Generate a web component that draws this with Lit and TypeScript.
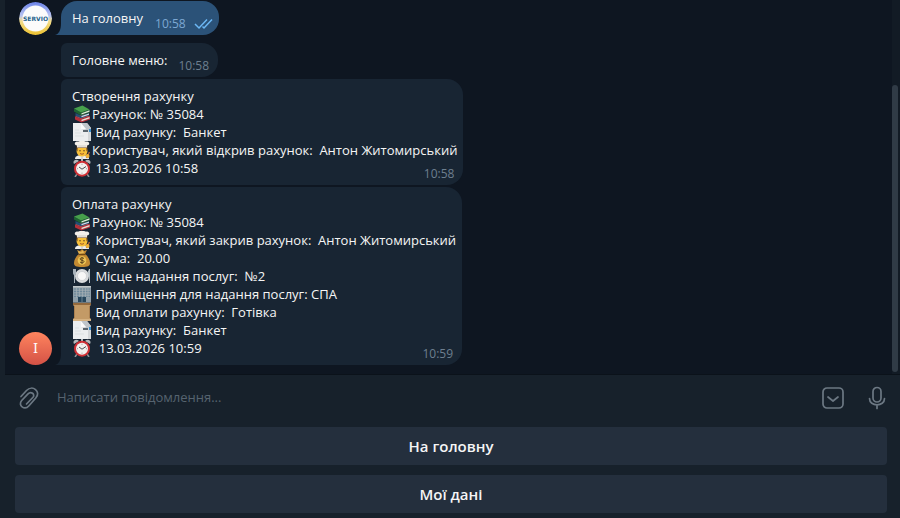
import { LitElement, html, css, svg } from "lit";
import { customElement } from "lit/decorators.js";

type IconName = "books" | "page" | "cook" | "clock" | "money" | "plate" | "office" | "scroll";
interface Line { icon?: IconName; text: string; }

const CREATED: Line[] = [
  { text: "Створення рахунку" },
  { icon: "books", text: "Рахунок: № 35084" },
  { icon: "page", text: " Вид рахунку:  Банкет" },
  { icon: "cook", text: "Користувач, який відкрив рахунок:  Антон Житомирський" },
  { icon: "clock", text: " 13.03.2026 10:58" },
];

const PAID: Line[] = [
  { text: "Оплата рахунку" },
  { icon: "books", text: "Рахунок: № 35084" },
  { icon: "cook", text: " Користувач, який закрив рахунок:  Антон Житомирський" },
  { icon: "money", text: " Сума:  20.00" },
  { icon: "plate", text: " Місце надання послуг:  №2" },
  { icon: "office", text: " Приміщення для надання послуг: СПА" },
  { icon: "scroll", text: " Вид оплати рахунку:  Готівка" },
  { icon: "page", text: " Вид рахунку:  Банкет" },
  { icon: "clock", text: "  13.03.2026 10:59" },
];

const ICONS = {
  books: svg`
    <path d="M2 11.500 8 14l9-3v3.500L8.500 17.500 2 14.500z" fill="#b5303a"/>
    <path d="M8.500 14.800 16.500 12v1.600L8.500 16.300z" fill="#e8ddd2"/>
    <path d="M2 11.500 10 9l7 2-9 3z" fill="#d3454a"/>
    <path d="M2.500 8 8 10.500 16 8v2.500L8 13.300 2.500 11z" fill="#234f74"/>
    <path d="M8.500 11 16 8.600v1.200L8.500 12.300z" fill="#d6e2e8"/>
    <path d="M1 3.500 8 7.500 16.500 4.500v3L8 10.500 1 6.500z" fill="#1d6332"/>
    <path d="M1 3.500 9.500.500l7 4L8 7.500z" fill="#47a04c"/>
    <path d="M8.500 8.200 16.500 5.300v1.400L8.500 9.600z" fill="#e2ead9"/>`,
  page: svg`
    <path d="M0 0h14l4 5v13H0z" fill="#d5d8da"/>
    <path d="M0 0h8v6l7 2v10H0z" fill="#eceeef"/>
    <path d="M8 0h6l4 5v2h-5z" fill="#bfc5ca"/>
    <path d="M8 0v6h5z" fill="#fbfbfb"/>
    <path d="M10 7h5v2h-5z" fill="#5c666d"/>
    <path d="M16 6h2v3h-2z" fill="#3b91ce"/>
    <path d="M2 7h4M2 10h6M2 13h9" stroke="#d6dadc" stroke-width=".7"/>`,
  cook: svg`
    <path d="M2 18c0-3 3-4 7-4s7 1 7 4z" fill="#ececec"/>
    <circle cx="9" cy="10" r="5.500" fill="#f8bf38"/>
    <path d="M3.500 9V5h11v4l-1 1.500V7H4.500v3.500z" fill="#66401f"/>
    <path d="M4 6.500V4.500C0 4 2-.5 5 .8c2-1.300 6-1.300 8 0 3-1.300 5 3.200 1 3.700v2z" fill="#f4f0ea"/>
    <path d="M4.500 5h9" stroke="#c9c4bd" stroke-width=".8"/>
    <circle cx="7" cy="9.700" r=".7" fill="#493321"/>
    <circle cx="11" cy="9.700" r=".7" fill="#493321"/>
    <path d="M7 12.500q2 1.500 4 0" fill="none" stroke="#8d4224" stroke-width=".8"/>
    <path d="m13.500 17 3-6" stroke="#b0623a" stroke-width="1.500"/>
    <circle cx="14.500" cy="15" r="2" fill="#f0b138"/>
    <path d="M9 15.500V18" stroke="#aaa" stroke-width=".7"/>`,
  clock: svg`
    <path d="m4 15-2 3M14 15l2 3" stroke="#8b9298" stroke-width="1.500"/>
    <path d="M1 5c-2-3 2-6 5-3zM17 5c2-3-2-6-5-3z" fill="#b3b7ba"/>
    <path d="M8 0h2v3H8z" fill="#b9bec2"/>
    <circle cx="9" cy="9.700" r="8" fill="#cf3036"/>
    <circle cx="9" cy="9.700" r="6" fill="#f3efee"/>
    <path d="m6 8 3 2.200L13 7.500" fill="none" stroke="#383d42" stroke-width=".9"/>
    <path d="M9 4.800v1M9 13.700v1M4 9.700h1M13 9.700h1" stroke="#8b8585" stroke-width=".8"/>`,
  money: svg`
    <path d="M6 5 4 1l3 1 2-2 2 2 3-1-2 4c3 2 5 6 5 9 0 3-2 4-8 4s-8-1-8-4c0-3 2-7 5-9z" fill="#c38a32"/>
    <path d="M6 5 5 2l3 1 2-2 1 3z" fill="#e4b858"/>
    <path d="M5.500 5.500h7" stroke="#704916" stroke-width="1.300"/>
    <circle cx="9" cy="11.500" r="4.300" fill="#ebc253"/>
    <path d="M11 9.500c-1-1-4-1-4 .5s4 1 4 2.500-3 1.500-4 .5M9 8v7" fill="none" stroke="#5c421c"/>`,
  plate: svg`
    <circle cx="9" cy="9" r="7" fill="#d9dbdd"/>
    <circle cx="9" cy="9" r="4.500" fill="#f7f7f7" stroke="#bfc3c7" stroke-width=".6"/>
    <path d="M.5 2v4q0 2 1 2t1-2V2M1.500 2v14" fill="none" stroke="#b8c2ca" stroke-width=".9"/>
    <path d="M16.500 16V2q-2 3-1 7h1" fill="#c7d0d6" stroke="#c7d0d6" stroke-width=".9"/>`,
  office: svg`
    <path d="M0 1h18v17H0z" fill="#8f9ea8"/>
    <path d="M0 1h18v1.500H0z" fill="#c0c7c9"/>
    <path d="M1 4h16M1 6.500h16M1 9h16M1 11.500h16" stroke="#6d8799" stroke-width="1.100"/>
    <path d="M3.500 2v11M6.500 2v11M9.500 2v11M12.500 2v11M15 2v11" stroke="#a5b0b6" stroke-width=".7"/>
    <path d="M5 12h8v5H5z" fill="#27465c"/>
    <path d="M9 12v5" stroke="#8aa1b0" stroke-width=".7"/>
    <path d="M0 17h18v1H0z" fill="#70777a"/>`,
  scroll: svg`
    <path d="M0 0h18v2l-1 1v12l1 1v2H0v-2l1-1V3L0 2z" fill="#c39a66"/>
    <path d="M0 0h18v2H0z" fill="#94693c"/>
    <path d="M0 16h18v2H0z" fill="#d6b281"/>
    <path d="M1 3h1v12H1zM16 3h1v12h-1z" fill="#aa8050"/>`,
};

const renderLine = (line: Line) => html`<div class="line">${line.icon
  ? html`<svg class="emoji" viewBox="0 0 18 18" aria-hidden="true">${ICONS[line.icon]}</svg>`
  : ""}<span>${line.text}</span></div>`;

const tail = (kind: string) => html`<svg class="tail ${kind}" viewBox="0 0 6 12" aria-hidden="true">
  <path d="M6 0v12H0C4 11 6 7 6 0z" fill="currentColor"/></svg>`;

@customElement("app-root")
export class AppRoot extends LitElement {
  static styles = css`
    :host {
      display: block;
      min-height: 100vh;
      background: #0e1621;
      color: #f5f5f5;
      font: 13px/18px "Open Sans", "Noto Sans", sans-serif;
    }
    * { box-sizing: border-box; }
    .window {
      display: flex;
      flex-direction: column;
      min-height: 100vh;
      border-left: 5px solid #17212b;
    }
    .chat {
      flex: 1;
      display: flex;
      justify-content: space-between;
    }
    .feed {
      flex: 1;
      display: flex;
      flex-direction: column;
      justify-content: flex-end;
      gap: 8px;
      padding: 1px 12px 9px 14px;
    }
    .group { display: flex; align-items: flex-end; gap: 9px; }
    .avatar { width: 33px; height: 33px; flex: none; border-radius: 50%; display: block; }
    .initial {
      display: grid;
      place-items: center;
      background: linear-gradient(#ff845e, #d45246);
      color: #fff;
      font-family: "DejaVu Serif", serif;
      font-size: 13px;
    }
    .stack { display: flex; flex-direction: column; align-items: flex-start; gap: 2px; }
    .bubble {
      position: relative;
      display: grid;
      padding: 8px 6px 8px 11px;
      background: #182533;
      border-radius: 6px 16px 16px 6px;
    }
    .bubble.last { border-bottom-left-radius: 0; }
    .bubble.short {
      display: flex;
      align-items: flex-end;
      gap: 11px;
      padding-right: 9px;
    }
    .bubble.own {
      gap: 12px;
      padding-right: 6px;
      background: #2b5278;
      border-radius: 16px 16px 16px 0;
    }
    .body { grid-area: 1 / 1; }
    .line { display: flex; height: 18px; white-space: pre; }
    .emoji { width: 18px; height: 18px; margin: 0 1px; flex: none; }
    .time {
      grid-area: 1 / 1;
      place-self: end;
      display: flex;
      align-items: center;
      gap: 8px;
      margin: 0 3px -6px 0;
      color: #6d7f8f;
      font-size: 12px;
    }
    .short .time { margin-right: 0; }
    .own .time { color: #7da8d3; }
    .checks { width: 19px; height: 12px; }
    .tail { position: absolute; left: -6px; bottom: 0; width: 6px; height: 12px; color: #182533; }
    .tail.sent { color: #2b5278; }
    .track { width: 8px; padding: 85px 2px 2px 0; display: flex; background: #121b25; }
    .thumb { width: 6px; border-radius: 3px; background: #303b46; flex: 1; }
    .composer { background: #17212b; border-top: 1px solid #0b121a; }
    .entry {
      display: flex;
      align-items: center;
      height: 46px;
      padding: 0 11px 0 12px;
    }
    button { border: 0; padding: 0; background: none; color: #6c7883; font: inherit; cursor: pointer; }
    .tool { flex: none; width: 24px; height: 26px; }
    .tool svg { display: block; width: 24px; height: 26px; }
    .tool + .tool { margin-left: 20px; }
    input {
      flex: 1;
      min-width: 0;
      margin-left: 16px;
      padding: 0 0 2px;
      border: 0;
      outline: 0;
      background: none;
      color: #f5f5f5;
      font: inherit;
    }
    input::placeholder { color: #56636f; opacity: 1; }
    .keyboard { display: grid; gap: 10px; padding: 6px 13px 5px 10px; }
    .key {
      height: 38px;
      border-radius: 4px;
      background: #242f3d;
      color: #f5f5f5;
      font-size: 15px;
      font-weight: 600;
    }
  `;

  render() {
    return html`
      <main class="window">
        <section class="chat">
          <div class="feed">
            <div class="group">
              <svg class="avatar" viewBox="0 0 33 33" role="img" aria-label="Servio">
                <defs><linearGradient id="ring" x1="0" y1="0" x2="0" y2="1">
                  <stop offset="0" stop-color="#6b83e8"/><stop offset=".42" stop-color="#b9c4f2"/>
                  <stop offset=".58" stop-color="#f3dd8c"/><stop offset="1" stop-color="#ecc12f"/>
                </linearGradient></defs>
                <circle cx="16.500" cy="16.500" r="16.500" fill="url(#ring)"/>
                <circle cx="16.500" cy="16.500" r="13" fill="#fbfbfb"/>
                <text x="16.500" y="18.500" text-anchor="middle" font-family="DejaVu Sans" font-weight="700" font-size="6" fill="#23628b">SERVIO</text>
              </svg>
              <div class="bubble short own">
                <div class="body">На головну</div>
                <div class="time">10:58
                  <svg class="checks" viewBox="0 0 19 12" fill="none" stroke="#6cb8f5" stroke-width="1.500" aria-hidden="true">
                    <path d="m1 6 4 4 8-8.500M8.500 8.500 10 10l8-8.500"/></svg>
                </div>
                ${tail("sent")}
              </div>
            </div>
            <div class="group">
              <div class="avatar initial">I</div>
              <div class="stack">
                <div class="bubble short"><div class="body">Головне меню:</div><div class="time">10:58</div></div>
                <div class="bubble"><div class="body">${CREATED.map(renderLine)}</div><div class="time">10:58</div></div>
                <div class="bubble last"><div class="body">${PAID.map(renderLine)}</div><div class="time">10:59</div>${tail("received")}</div>
              </div>
            </div>
          </div>
          <div class="track"><div class="thumb"></div></div>
        </section>
        <footer class="composer">
          <div class="entry">
            <button class="tool" aria-label="Прикріпити файл">
              <svg viewBox="0 0 24 26" fill="none" stroke="currentColor" stroke-width="1.700" stroke-linecap="round">
                <path d="M4 11.500 9.500 5.500c6-6 15 1 9.300 7.500L12 20.800c-4.500 5-11.500-.3-7.300-5.300L11 8.800c3-3 7.500.5 5 3.500L9.500 19"/></svg>
            </button>
            <input type="text" placeholder="Написати повідомлення..." aria-label="Написати повідомлення">
            <button class="tool" aria-label="Сховати клавіатуру">
              <svg viewBox="0 0 24 26" fill="none" stroke="currentColor" stroke-width="1.700" stroke-linecap="round" stroke-linejoin="round">
                <rect x="2" y="3" width="20" height="20" rx="4"/><path d="m7 12 5 4 5-4"/></svg>
            </button>
            <button class="tool" aria-label="Голосове повідомлення">
              <svg viewBox="0 0 24 26" fill="none" stroke="currentColor" stroke-width="1.700" stroke-linecap="round">
                <rect x="8" y="2.500" width="8" height="14.500" rx="4"/><path d="M4.500 13.500c0 8.500 15 8.500 15 0M12 20v3.500"/></svg>
            </button>
          </div>
          <div class="keyboard">
            <button class="key">На головну</button>
            <button class="key">Мої дані</button>
          </div>
        </footer>
      </main>
    `;
  }
}
